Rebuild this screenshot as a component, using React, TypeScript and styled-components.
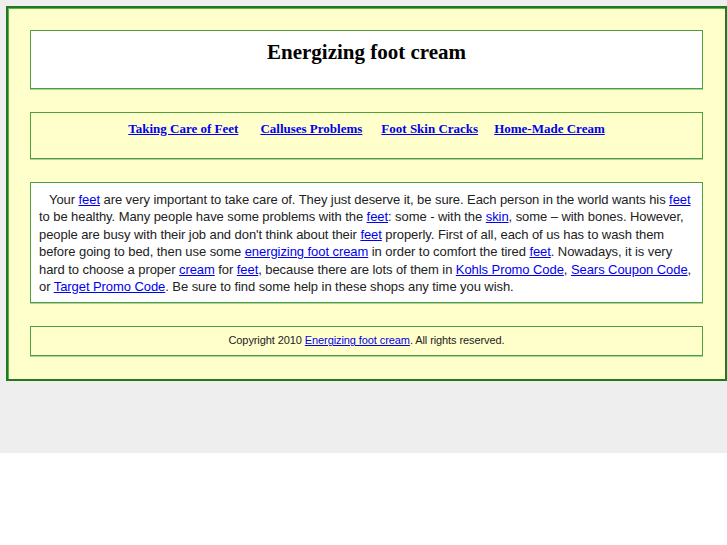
import React from 'react';
import styled, { createGlobalStyle } from 'styled-components';

const Global = createGlobalStyle`
  html, body { margin: 0; padding: 0; background: #fff; }
`;

const Page = styled.div`
  background: #eeeeee;
  height: 453px;
  padding: 6px 0 0 6px;
  box-sizing: border-box;
  overflow: hidden;
`;

const Frame = styled.div`
  width: 721px;
  box-sizing: border-box;
  background: #ffffcc;
  border: 2px solid #1f7a1f;
  box-shadow: inset 1px 1px 0 #5fae4f;
  padding: 22px 22px 23px 22px;
  display: flex;
  flex-direction: column;
  gap: 23px;
`;

const Box = styled.div<{ $bg: string; $h?: number }>`
  background: ${p => p.$bg};
  border: 1px solid #4f9f3f;
  box-shadow: 0 1px 0 #a9d39a;
  box-sizing: border-box;
  ${p => (p.$h ? `height: ${p.$h}px;` : '')}
`;

const Title = styled.h1`
  margin: 0;
  padding-top: 9px;
  text-align: center;
  font-family: 'Liberation Serif', serif;
  font-weight: bold;
  font-size: 21px;
  line-height: 24px;
  color: #000;
`;

const Nav = styled.div`
  display: flex;
  justify-content: center;
  padding-top: 7px;
  font-family: 'Liberation Serif', serif;
  font-weight: bold;
  font-size: 13px;
  line-height: 18px;
  white-space: nowrap;
`;

const NavLink = styled.a<{ $gap?: number }>`
  color: #0000ee;
  text-decoration: underline;
  margin-left: ${p => p.$gap ?? 0}px;
`;

const Text = styled.p`
  margin: 0;
  padding: 8px 8px 7px 8px;
  font-family: 'Liberation Sans', Arial, sans-serif;
  font-size: 13px;
  letter-spacing: -0.07px;
  line-height: 17.4px;
  color: #222;
  text-indent: 10px;
`;

const L = styled.a`
  color: #0000ee;
  text-decoration: underline;
`;

const Foot = styled.div`
  text-align: center;
  padding-top: 6px;
  font-family: 'Liberation Sans', Arial, sans-serif;
  font-size: 11px;
  letter-spacing: -0.09px;
  line-height: 15px;
  color: #222;
`;

export default function App() {
  return (
    <>
      <Global />
      <Page>
        <Frame>
          <Box $bg="#ffffff" $h={59}>
            <Title>Energizing foot cream</Title>
          </Box>
          <Box $bg="#ffffcc" $h={47}>
            <Nav>
              <NavLink href="#">Taking Care of Feet</NavLink>
              <NavLink href="#" $gap={22}>Calluses Problems</NavLink>
              <NavLink href="#" $gap={19}>Foot Skin Cracks</NavLink>
              <NavLink href="#" $gap={16}>Home-Made Cream</NavLink>
            </Nav>
          </Box>
          <Box $bg="#ffffff">
            <Text>
              Your <L href="#">feet</L> are very important to take care of. They just deserve it, be sure. Each person in the world wants his <L href="#">feet</L> to be healthy. Many people have some problems with the <L href="#">feet</L>: some - with the <L href="#">skin</L>, some – with bones. However, people are busy with their job and don't think about their <L href="#">feet</L> properly. First of all, each of us has to wash them before going to bed, then use some <L href="#">energizing foot cream</L> in order to comfort the tired <L href="#">feet</L>. Nowadays, it is very hard to choose a proper <L href="#">cream</L> for <L href="#">feet</L>, because there are lots of them in <L href="#">Kohls Promo Code</L>, <L href="#">Sears Coupon Code</L>, or <L href="#">Target Promo Code</L>. Be sure to find some help in these shops any time you wish.
            </Text>
          </Box>
          <Box $bg="#ffffcc" $h={30}>
            <Foot>
              Copyright 2010 <L href="#">Energizing foot cream</L>. All rights reserved.
            </Foot>
          </Box>
        </Frame>
      </Page>
    </>
  );
}
